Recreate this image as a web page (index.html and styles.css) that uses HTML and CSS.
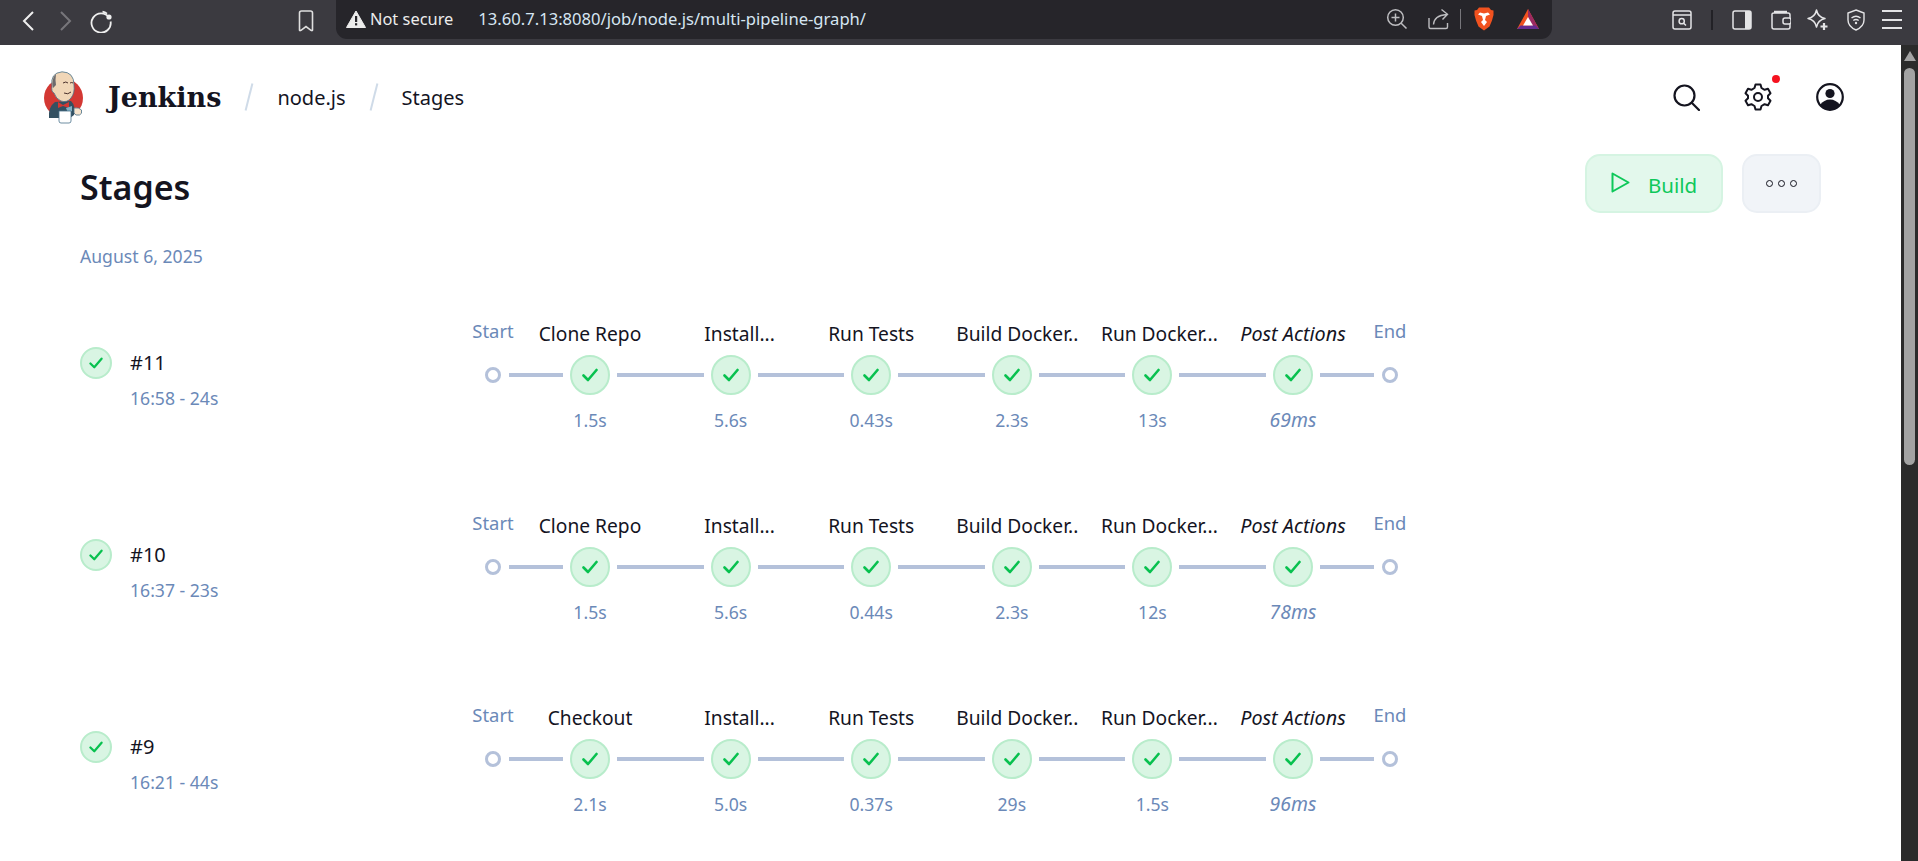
FILE: index.html
```html
<!DOCTYPE html>
<html lang="en">
<head>
    <meta charset="UTF-8">
    <title>Stages</title>
    <link rel="stylesheet" href="styles.css">
</head>
<body>
    <svg class="sprites" width="0" height="0">
        <symbol id="check" viewBox="0 0 16 14">
            <path d="M1.5 7.5 L6 12 L14.5 2" fill="none" stroke="currentColor" stroke-width="2.6" stroke-linecap="round" stroke-linejoin="round"/>
        </symbol>
    </svg>

    <!-- browser toolbar -->
    <div class="toolbar">
        <div class="nav-buttons">
            <svg class="tb-icon back" viewBox="0 0 14 22"><path d="M11 2 L2 11 L11 20" fill="none" stroke="currentColor" stroke-width="2"/></svg>
            <svg class="tb-icon forward" viewBox="0 0 14 22"><path d="M3 2 L12 11 L3 20" fill="none" stroke="currentColor" stroke-width="2"/></svg>
            <svg class="tb-icon reload" viewBox="0 0 24 24"><path d="M20 8.5 A9.6 9.6 0 1 0 21.6 12.5" fill="none" stroke="currentColor" stroke-width="1.8"/><path d="M13.5 2.6 A9.6 9.6 0 0 1 18 4.6" fill="none" stroke="currentColor" stroke-width="1.8"/><circle cx="20" cy="8" r="2.6" fill="currentColor"/></svg>
            <svg class="tb-icon bookmark" viewBox="0 0 16 22"><path d="M1.5 3 Q1.5 1 3.5 1 H12.5 Q14.5 1 14.5 3 V20 Q14.5 21 13 20.3 L8 16.5 L3 20.3 Q1.5 21 1.5 20 Z" fill="none" stroke="currentColor" stroke-width="1.6"/></svg>
        </div>
        <div class="urlbar">
            <svg class="warn" viewBox="0 0 20 18"><path d="M10 1 L19.5 17.5 H0.5 Z" fill="#ececec" stroke="#ececec" stroke-linejoin="round"/><rect x="9" y="6" width="2.2" height="6" fill="#26252a"/><rect x="9" y="13.2" width="2.2" height="2.2" fill="#26252a"/></svg>
            <span class="not-secure">Not secure</span>
            <span class="url">13.60.7.13:8080/job/node.js/multi-pipeline-graph/</span>
            <div class="url-actions">
                <svg class="zoom-icon" viewBox="0 0 22 22"><circle cx="9.5" cy="9.5" r="7.8" fill="none" stroke="currentColor" stroke-width="1.5"/><path d="M15.2 15.2 L20.5 20.5 M9.5 5.5 V13.5 M5.5 9.5 H13.5" fill="none" stroke="currentColor" stroke-width="1.5"/></svg>
                <svg class="share-icon" viewBox="0 0 22 22"><path d="M1 10 V19 Q1 20.5 2.5 20.5 H18 Q19.5 20.5 19.5 19 V15" fill="none" stroke="currentColor" stroke-width="1.4"/><path d="M5.5 16.5 Q6 7.5 18.5 6.5 M13.5 1.5 L19.5 6.3 L14.5 11.5" fill="none" stroke="currentColor" stroke-width="1.4"/></svg>
                <span class="url-sep"></span>
                <svg class="brave-icon" viewBox="0 0 20 24"><path d="M5 0.5 H15 L17 3 L19.5 3.5 L19.5 8 L18 13.5 L15.5 19.5 L10 23.5 L4.5 19.5 L2 13.5 L0.5 8 L0.5 3.5 L3 3 Z" fill="#f1521f"/><path d="M4 7.5 L8 9 L9 13 L7 15 L10 19 L13 15 L11 13 L12 9 L16 7.5 L14 5.5 L10 6.5 L6 5.5 Z" fill="#fff"/></svg>
                <svg class="bat-icon" viewBox="0 0 22 20"><path d="M11 0 L22 20 H0 Z" fill="#f1521f"/><path d="M11 0 L22 20 H14.5 L11 7 Z" fill="#9c2a62"/><path d="M0 20 L3.5 16.5 H18.5 L22 20 Z" fill="#662d91"/><path d="M11 8 L16 16.5 H6 Z" fill="#fff"/></svg>
            </div>
        </div>
        <div class="tb-right">
            <svg class="ext reader" viewBox="0 0 20 20"><rect x="1" y="1" width="18" height="18" rx="2" fill="none" stroke="currentColor" stroke-width="1.5"/><path d="M1 5 H19" stroke="currentColor" stroke-width="1.5"/><circle cx="9.7" cy="11.2" r="2.6" fill="none" stroke="currentColor" stroke-width="1.5"/><path d="M11.5 13 L14 15.5" stroke="currentColor" stroke-width="1.5"/></svg>
            <span class="tb-sep"></span>
            <svg class="ext sidebar" viewBox="0 0 20 20"><rect x="1" y="1" width="18" height="18" rx="2" fill="none" stroke="currentColor" stroke-width="1.5"/><path d="M13 1 H17 Q19 1 19 3 V17 Q19 19 17 19 H13 Z" fill="currentColor"/></svg>
            <svg class="ext wallet" viewBox="0 0 20 20"><path d="M3 1.5 H16 M1 4 Q1 3 3 3 H17 Q19 3 19 5 V17 Q19 19 17 19 H3 Q1 19 1 17 Z" fill="none" stroke="currentColor" stroke-width="1.5"/><rect x="12" y="8" width="8" height="6" rx="2" fill="#3b3a40" stroke="currentColor" stroke-width="1.5"/></svg>
            <svg class="ext star" viewBox="0 0 22 22"><path d="M9.5 1 C10.5 6 13 8.5 18 9.5 C13 10.5 10.5 13 9.5 18 C8.5 13 6 10.5 1 9.5 C6 8.5 8.5 6 9.5 1 Z" fill="none" stroke="currentColor" stroke-width="1.5" stroke-linejoin="round"/><path d="M17 14 V21 M13.5 17.5 H20.5" stroke="currentColor" stroke-width="2.2"/></svg>
            <svg class="ext shield" viewBox="0 0 18 22"><path d="M9 1 L17 4 V11 Q17 17.5 9 21 Q1 17.5 1 11 V4 Z" fill="none" stroke="currentColor" stroke-width="1.4"/><path d="M4.5 9 Q9 5.5 13.5 9 M6.3 11.5 Q9 9.5 11.7 11.5" fill="none" stroke="currentColor" stroke-width="1.4"/><circle cx="9" cy="14" r="1.2" fill="currentColor"/></svg>
            <div class="menu-icon"><span></span><span></span><span></span></div>
        </div>
    </div>

    <div class="viewport">
        <div class="page">
            <header class="app-bar">
                <div class="crumbs">
                    <svg class="logo" viewBox="0 0 41 53">
                        <circle cx="20.5" cy="27" r="19.5" fill="#d33833"/>
                        <path d="M6 47 Q5 36 12 31 L28 30 Q33 35 31 44 L27 47 Z" fill="#335061"/>
                        <path d="M9 15 Q7 2 19 0.8 Q31 1 31 14 Q32 22 28 27 Q24 32 18 30 Q13 28 11 22 Q8 21 9 15 Z" fill="#f0d6b7" stroke="#49728b" stroke-width="0.8"/>
                        <path d="M10 17 Q8 8 13 3 Q12 9 13 14 Z" fill="#6d6b6d"/>
                        <path d="M20 12 Q23 10 25 12 M27 12 Q29 11 30 12 M21 22 Q25 24 28 21" fill="none" stroke="#49302b" stroke-width="1"/>
                        <path d="M15 31 L20 34 L26 31 L26 37 L20 35 L15 37 Z" fill="#d33833"/>
                        <path d="M23 37 L29 35 L29 40 L25 42 Z" fill="#81b0c4"/>
                        <path d="M16 40 H28 V50 Q28 52 26 52 H18 Q16 52 16 50 Z" fill="#fff" stroke="#49728b" stroke-width="0.8"/>
                        <path d="M31 37 Q36 36 38.5 39 Q39.5 43 36.5 44 Q32 45 31 42 Z" fill="#f7e4cd" stroke="#49728b" stroke-width="0.8"/>
                    </svg>
                    <span class="brand">Jenkins</span>
                    <span class="crumb-sep"></span>
                    <span class="crumb">node.js</span>
                    <span class="crumb-sep"></span>
                    <span class="crumb">Stages</span>
                </div>
                <div class="app-actions">
                    <svg class="app-icon" viewBox="0 0 28 28"><circle cx="12.5" cy="12.5" r="10" fill="none" stroke="currentColor" stroke-width="2.2"/><path d="M20 20 L27 27" stroke="currentColor" stroke-width="2.2" stroke-linecap="round"/></svg>
                    <div class="settings">
                        <svg class="app-icon" viewBox="0 0 28 28"><path d="M11.5 1.5 H16.5 L17.5 5 L20.6 6.8 L24 5.8 L26.5 10.2 L24 12.7 V15.3 L26.5 17.8 L24 22.2 L20.6 21.2 L17.5 23 L16.5 26.5 H11.5 L10.5 23 L7.4 21.2 L4 22.2 L1.5 17.8 L4 15.3 V12.7 L1.5 10.2 L4 5.8 L7.4 6.8 L10.5 5 Z" fill="none" stroke="currentColor" stroke-width="2" stroke-linejoin="round"/><circle cx="14" cy="14" r="4" fill="none" stroke="currentColor" stroke-width="2"/></svg>
                        <span class="dot"></span>
                    </div>
                    <svg class="app-icon" viewBox="0 0 28 28"><circle cx="14" cy="14" r="12.8" fill="#fff" stroke="currentColor" stroke-width="2.2"/><circle cx="14" cy="10.5" r="4.6" fill="currentColor"/><path d="M4 22 Q8 16.5 14 16.5 Q20 16.5 24 22 Q20 27 14 27 Q8 27 4 22 Z" fill="currentColor"/></svg>
                </div>
            </header>

            <main class="content">
                <div class="title-row">
                    <h1>Stages</h1>
                    <div class="buttons">
                        <button class="btn btn-build">
                            <svg class="play" viewBox="0 0 19 21"><path d="M1.5 1.5 L17.5 10.5 L1.5 19.5 Z" fill="none" stroke="currentColor" stroke-width="2" stroke-linejoin="round"/></svg>
                            Build
                        </button>
                        <button class="btn btn-more"><span></span><span></span><span></span></button>
                    </div>
                </div>
                <div class="date">August 6, 2025</div>

                <div class="run">
                    <div class="run-info">
                        <span class="status"><svg><use href="#check"/></svg></span>
                        <div>
                            <div class="run-name">#11</div>
                            <div class="run-time">16:58 - 24s</div>
                        </div>
                    </div>
                    <div class="graph">
                        <div class="stage edge"><span class="label">Start</span><span class="node"></span></div>
                        <span class="link short-a"></span>
                        <div class="stage"><span class="label">Clone Repo</span><span class="node"><svg><use href="#check"/></svg></span><span class="time">1.5s</span></div>
                        <span class="link"></span>
                        <div class="stage"><span class="label cut-install">Install...</span><span class="node"><svg><use href="#check"/></svg></span><span class="time">5.6s</span></div>
                        <span class="link"></span>
                        <div class="stage"><span class="label">Run Tests</span><span class="node"><svg><use href="#check"/></svg></span><span class="time">0.43s</span></div>
                        <span class="link"></span>
                        <div class="stage"><span class="label cut-build">Build Docker..</span><span class="node"><svg><use href="#check"/></svg></span><span class="time">2.3s</span></div>
                        <span class="link"></span>
                        <div class="stage"><span class="label cut-run">Run Docker...</span><span class="node"><svg><use href="#check"/></svg></span><span class="time">13s</span></div>
                        <span class="link"></span>
                        <div class="stage post"><span class="label">Post Actions</span><span class="node"><svg><use href="#check"/></svg></span><span class="time">69ms</span></div>
                        <span class="link short-b"></span>
                        <div class="stage edge"><span class="label">End</span><span class="node"></span></div>
                    </div>
                </div>

                <div class="run">
                    <div class="run-info">
                        <span class="status"><svg><use href="#check"/></svg></span>
                        <div>
                            <div class="run-name">#10</div>
                            <div class="run-time">16:37 - 23s</div>
                        </div>
                    </div>
                    <div class="graph">
                        <div class="stage edge"><span class="label">Start</span><span class="node"></span></div>
                        <span class="link short-a"></span>
                        <div class="stage"><span class="label">Clone Repo</span><span class="node"><svg><use href="#check"/></svg></span><span class="time">1.5s</span></div>
                        <span class="link"></span>
                        <div class="stage"><span class="label cut-install">Install...</span><span class="node"><svg><use href="#check"/></svg></span><span class="time">5.6s</span></div>
                        <span class="link"></span>
                        <div class="stage"><span class="label">Run Tests</span><span class="node"><svg><use href="#check"/></svg></span><span class="time">0.44s</span></div>
                        <span class="link"></span>
                        <div class="stage"><span class="label cut-build">Build Docker..</span><span class="node"><svg><use href="#check"/></svg></span><span class="time">2.3s</span></div>
                        <span class="link"></span>
                        <div class="stage"><span class="label cut-run">Run Docker...</span><span class="node"><svg><use href="#check"/></svg></span><span class="time">12s</span></div>
                        <span class="link"></span>
                        <div class="stage post"><span class="label">Post Actions</span><span class="node"><svg><use href="#check"/></svg></span><span class="time">78ms</span></div>
                        <span class="link short-b"></span>
                        <div class="stage edge"><span class="label">End</span><span class="node"></span></div>
                    </div>
                </div>

                <div class="run">
                    <div class="run-info">
                        <span class="status"><svg><use href="#check"/></svg></span>
                        <div>
                            <div class="run-name">#9</div>
                            <div class="run-time">16:21 - 44s</div>
                        </div>
                    </div>
                    <div class="graph">
                        <div class="stage edge"><span class="label">Start</span><span class="node"></span></div>
                        <span class="link short-a"></span>
                        <div class="stage"><span class="label">Checkout</span><span class="node"><svg><use href="#check"/></svg></span><span class="time">2.1s</span></div>
                        <span class="link"></span>
                        <div class="stage"><span class="label cut-install">Install...</span><span class="node"><svg><use href="#check"/></svg></span><span class="time">5.0s</span></div>
                        <span class="link"></span>
                        <div class="stage"><span class="label">Run Tests</span><span class="node"><svg><use href="#check"/></svg></span><span class="time">0.37s</span></div>
                        <span class="link"></span>
                        <div class="stage"><span class="label cut-build">Build Docker..</span><span class="node"><svg><use href="#check"/></svg></span><span class="time">29s</span></div>
                        <span class="link"></span>
                        <div class="stage"><span class="label cut-run">Run Docker...</span><span class="node"><svg><use href="#check"/></svg></span><span class="time">1.5s</span></div>
                        <span class="link"></span>
                        <div class="stage post"><span class="label">Post Actions</span><span class="node"><svg><use href="#check"/></svg></span><span class="time">96ms</span></div>
                        <span class="link short-b"></span>
                        <div class="stage edge"><span class="label">End</span><span class="node"></span></div>
                    </div>
                </div>
            </main>
        </div>

        <div class="scrollbar">
            <span class="scroll-up"></span>
            <span class="scroll-thumb"></span>
        </div>
    </div>
</body>
</html>
```

FILE: styles.css
```css
* {
    margin: 0;
    padding: 0;
    box-sizing: border-box;
}

html, body {
    height: 100%;
    overflow: hidden;
}

body {
    background-color: white;
    color: #14141f;
    font-family: 'Noto Sans', 'Open Sans', sans-serif;
    display: flex;
    flex-direction: column;
}

.sprites {
    display: block;
    height: 0;
}

/* browser toolbar */
.toolbar {
    height: 45px;
    flex: none;
    display: flex;
    background-color: #3b3a40;
    color: #e4e4e6;
}

.nav-buttons {
    width: 336px;
    flex: none;
    display: flex;
    align-items: center;
    padding: 0 0 3px 22px;
}

.back {
    width: 14px;
    height: 22px;
    color: #efefef;
}

.forward {
    width: 14px;
    height: 22px;
    margin-left: 22px;
    color: #77767b;
}

.reload {
    width: 24px;
    height: 24px;
    margin-left: 17px;
    color: #efefef;
}

.bookmark {
    width: 16px;
    height: 22px;
    margin-left: 185px;
    color: #dfdfdf;
}

.urlbar {
    width: 1216px;
    height: 39px;
    flex: none;
    display: flex;
    align-items: center;
    padding: 0 0 2px 10px;
    background-color: #26252a;
    border-radius: 0 0 11px 11px;
    font-size: 16.4px;
}

.warn {
    width: 20px;
    height: 18px;
}

.not-secure {
    margin-left: 4px;
    color: #ececec;
}

.url {
    margin-left: 25px;
    font-size: 16.6px;
    color: #d6e6f2;
}

.url-actions {
    margin-left: auto;
    display: flex;
    align-items: center;
    color: #bdbdc0;
}

.zoom-icon {
    width: 22px;
    height: 22px;
    margin-right: 20px;
}

.share-icon {
    width: 22px;
    height: 22px;
    margin-right: 10px;
}

.url-sep {
    width: 1px;
    height: 20px;
    background-color: #77767b;
    margin-right: 13px;
}

.brave-icon {
    width: 20px;
    height: 24px;
    margin-right: 23px;
}

.bat-icon {
    width: 22px;
    height: 20px;
    margin-right: 13px;
}

.tb-right {
    flex: 1;
    display: flex;
    align-items: center;
    padding: 0 0 6px 120px;
}

.ext {
    width: 20px;
    height: 20px;
    flex: none;
}

.tb-sep {
    width: 2px;
    height: 20px;
    background-color: #222126;
    margin: 0 19px;
}

.wallet {
    margin-left: 19px;
}

.star {
    margin-left: 16px;
    width: 22px;
    height: 22px;
}

.shield {
    margin-left: 18px;
    width: 18px;
    height: 22px;
}

.menu-icon {
    margin-left: 17px;
    width: 20px;
    height: 19px;
    display: flex;
    flex-direction: column;
    justify-content: space-between;
}

.menu-icon span {
    height: 2px;
    background-color: #e4e4e6;
}

/* page */
.viewport {
    flex: 1;
    min-height: 0;
    display: flex;
}

.page {
    flex: 1;
    min-width: 0;
}

.scrollbar {
    width: 17px;
    flex: none;
    display: flex;
    flex-direction: column;
    align-items: center;
    background-color: #2b2b2b;
}

.scroll-up {
    margin-top: 6px;
    border-left: 6px solid transparent;
    border-right: 6px solid transparent;
    border-bottom: 10px solid #a3a3a3;
}

.scroll-thumb {
    width: 11px;
    height: 397px;
    margin-top: 7px;
    background-color: #a3a3a3;
    border-radius: 6px;
}

.app-bar {
    height: 104px;
    display: flex;
    justify-content: space-between;
    align-items: center;
    padding: 0 57px 0 43px;
}

.crumbs {
    display: flex;
    align-items: center;
    font-size: 20px;
}

.logo {
    width: 41px;
    height: 53px;
}

.brand {
    margin-left: 24px;
    font-family: 'DejaVu Serif', 'Liberation Serif', serif;
    font-weight: 700;
    font-size: 27px;
}

.crumb-sep {
    width: 2px;
    height: 28px;
    margin: 0 27px;
    background-color: #cfdbe8;
    transform: rotate(14deg);
}

.app-actions {
    display: flex;
    align-items: center;
    gap: 44px;
}

.app-icon {
    width: 28px;
    height: 28px;
    display: block;
}

.settings {
    position: relative;
}

.dot {
    position: absolute;
    top: -8px;
    right: -8px;
    width: 8px;
    height: 8px;
    background-color: #f5121f;
    border-radius: 50%;
}

.content {
    padding: 5px 80px 0;
}

.title-row {
    display: flex;
    justify-content: space-between;
}

h1 {
    font-size: 34px;
    font-weight: 600;
    line-height: 50px;
    padding-top: 8px;
}

.buttons {
    display: flex;
    gap: 19px;
}

.btn {
    height: 59px;
    border-radius: 15px;
    font-family: inherit;
    font-size: 20.5px;
    display: flex;
    align-items: center;
    justify-content: center;
}

.btn-build {
    width: 138px;
    gap: 18px;
    padding-top: 3px;
    background-color: #e3f8ec;
    border: 2px solid #d5f4e2;
    color: #0ec85a;
}

.play {
    width: 19px;
    height: 21px;
    margin-top: -5px;
}

.btn-more {
    width: 79px;
    gap: 5px;
    background-color: #f1f4f8;
    border: 2px solid #ebeff4;
}

.btn-more span {
    width: 7px;
    height: 7px;
    border: 1.5px solid #14141f;
    border-radius: 50%;
}

.date {
    margin-top: 31px;
    font-size: 17.6px;
    line-height: 24px;
    color: #6b89b8;
}

.run {
    height: 192px;
    display: flex;
    align-items: flex-start;
}

.date + .run {
    margin-top: 53px;
}

.run-info {
    width: 405px;
    flex: none;
    display: flex;
    gap: 18px;
    margin-top: 26px;
}

.status {
    width: 32px;
    height: 32px;
    display: flex;
    align-items: center;
    justify-content: center;
    background-color: #d9f5e3;
    border: 2px solid #b8eccb;
    border-radius: 50%;
    color: #08c14f;
}

.status svg {
    width: 14px;
    height: 12px;
}

.run-name {
    font-size: 20px;
    line-height: 32px;
}

.run-time {
    margin-top: 7px;
    font-size: 17.6px;
    line-height: 24px;
    color: #6b89b8;
}

.graph {
    display: flex;
    align-items: flex-start;
}

.stage {
    width: 40px;
    flex: none;
    display: flex;
    flex-direction: column;
    align-items: center;
    white-space: nowrap;
}

.label {
    height: 34px;
    font-size: 19.2px;
    line-height: 26px;
}

.node {
    width: 40px;
    height: 40px;
    flex: none;
    display: flex;
    align-items: center;
    justify-content: center;
    background-color: #d9f5e3;
    border: 2px solid #b8eccb;
    border-radius: 50%;
    color: #08c14f;
}

.node svg {
    width: 16px;
    height: 14px;
}

.time {
    margin-top: 13px;
    font-size: 17.6px;
    line-height: 24px;
    color: #6b89b8;
}

.link {
    width: 86.6px;
    height: 4px;
    margin: 52px 7px 0;
    background-color: #b4c1da;
    flex: none;
}

.link.short-a {
    width: 54px;
    margin-left: 8px;
}

.link.short-b {
    width: 54px;
    margin-right: 8px;
}

.edge {
    width: 16px;
}

.edge .label {
    font-size: 18.4px;
    line-height: 20px;
    color: #6b89b8;
}

.edge .node {
    width: 16px;
    height: 16px;
    margin-top: 12px;
    background-color: white;
    border: 3px solid #b4c1da;
}

.post .label {
    font-size: 19.8px;
    font-style: italic;
}

.post .time {
    font-size: 19.4px;
    line-height: 24px;
    font-style: italic;
}

/* names cut short keep the ellipsis outside the centre of the node */
.cut-install {
    margin-left: 18px;
}

.cut-build {
    margin-left: 11px;
}

.cut-run {
    margin-left: 14px;
}
```
